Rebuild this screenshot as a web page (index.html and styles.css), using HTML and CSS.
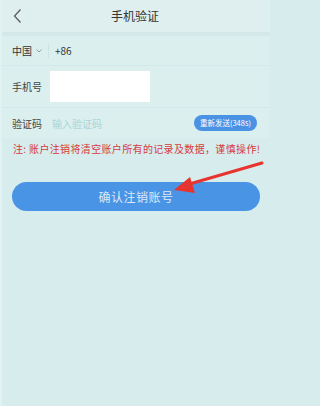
FILE: index.html
```html
<!DOCTYPE html>
<html lang="zh">
<head>
<meta charset="utf-8">
<link rel="stylesheet" href="styles.css">
</head>
<body>
<div class="page">
  <header class="topbar">
    <div class="back">
      <svg width="10" height="16" viewBox="0 0 10 16"><path d="M7.5 1.5 L1.5 8 L7.5 14.5" fill="none" stroke="#555" stroke-width="1.2"/></svg>
    </div>
    <div class="title">手机验证</div>
    <div></div>
  </header>
  <div class="gap"></div>
  <section class="form">
    <div class="row row-country">
      <span class="country">中国</span>
      <svg class="caret" width="6" height="4" viewBox="0 0 6 4"><path d="M0.5 0.5 L3 3 L5.5 0.5" fill="none" stroke="#888" stroke-width="0.8"/></svg>
      <span class="vsep"></span>
      <span class="code">+86</span>
    </div>
    <div class="row row-phone">
      <span class="label">手机号</span>
      <div class="input-white"></div>
    </div>
    <div class="row row-code">
      <span class="label">验证码</span>
      <span class="placeholder">输入验证码</span>
      <span class="resend">重新发送(348s)</span>
    </div>
  </section>
  <p class="note">注: 账户注销将清空账户所有的记录及数据，谨慎操作!</p>
  <div class="btn">确认注销账号</div>
  <svg class="arrow" width="270" height="406" viewBox="0 0 270 406">
    <line x1="262" y1="163" x2="186" y2="185" stroke="#e8342e" stroke-width="3" stroke-linecap="round"/>
    <polygon points="174,190 190,177 195,193" fill="#e8342e"/>
  </svg>
</div>
</body>
</html>
```
FILE: styles.css
```css
html {
  background: #d6eced;
}
html, body {
  margin: 0;
  padding: 0;
}
body {
  background: #d6eced;
  font-family: "Noto Sans CJK SC", "Noto Sans", sans-serif;
  min-height: 406px;
  overflow: hidden;
}
.page {
  position: relative;
  width: 270px;
  height: 406px;
  border-left: 2px solid #e2f1f1;
  box-sizing: border-box;
}
.topbar {
  height: 32px;
  background: #dfeff0;
  display: grid;
  grid-template-columns: 30px 1fr 30px;
  align-items: center;
}
.back {
  display: flex;
  align-items: center;
  padding-left: 11px;
  height: 32px;
}
.title {
  text-align: center;
  font-size: 12px;
  color: #333;
  line-height: 32px;
  margin-left: -2px;
}
.gap {
  height: 4px;
  background: #d2e8e9;
}
.form {
  background: #dbefef;
}
.row {
  display: flex;
  align-items: center;
  padding-left: 10px;
  box-sizing: border-box;
}
.row-country {
  height: 30px;
  border-bottom: 1px solid #d4e9ea;
}
.country {
  font-size: 10px;
  color: #333;
}
.caret {
  margin-left: 4px;
}
.vsep {
  width: 1px;
  height: 14px;
  background: #cfe3e4;
  margin-left: 6px;
  margin-right: 6px;
}
.code {
  font-size: 10px;
  color: #333;
}
.row-phone {
  height: 42px;
  border-bottom: 1px solid #d4e9ea;
}
.label {
  font-size: 10px;
  color: #444;
  width: 37px;
}
.input-white {
  width: 100px;
  height: 31px;
  background: #ffffff;
  margin-left: 1px;
}
.row-code {
  height: 30px;
  padding-right: 13px;
}
.placeholder {
  font-size: 10px;
  color: #a8d5d7;
  margin-left: 3px;
  flex: 1;
}
.resend {
  background: #4a92e4;
  color: #fff;
  font-size: 7.5px;
  height: 16px;
  line-height: 16px;
  padding: 0 6px;
  border-radius: 8px;
}
.note {
  margin: 0;
  padding: 3px 0 0 11px;
  font-size: 10px;
  letter-spacing: 0.35px;
  color: #d63a3c;
  line-height: 16px;
  white-space: nowrap;
}
.btn {
  margin: 25px 10px 0 10px;
  height: 29px;
  border-radius: 14.5px;
  background: #4a94e6;
  color: #dfe9f6;
  font-size: 12px;
  display: flex;
  align-items: center;
  justify-content: center;
  letter-spacing: 0.5px;
}
.arrow {
  position: absolute;
  left: -2px;
  top: 0;
  pointer-events: none;
}
```
